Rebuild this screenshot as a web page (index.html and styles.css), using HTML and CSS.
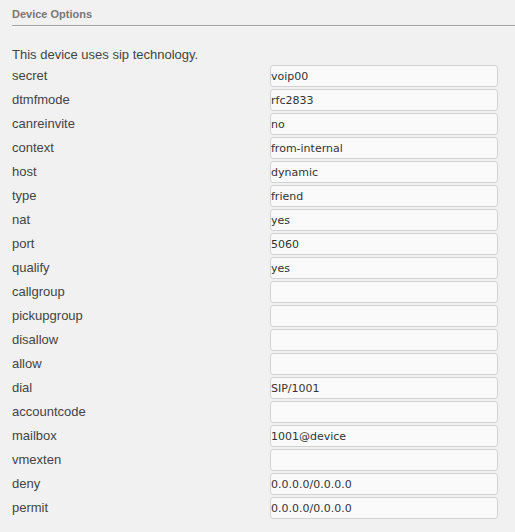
FILE: index.html
```html
<!DOCTYPE html>
<html>
<head>
<meta charset="utf-8">
<link rel="stylesheet" href="styles.css">
</head>
<body>
<div class="panel">
  <div class="legend">Device Options</div>
  <div class="rule"></div>
  <p class="intro">This device uses sip technology.</p>
  <div class="form">
    <label>secret</label><input type="text" value="voip00">
    <label>dtmfmode</label><input type="text" value="rfc2833">
    <label>canreinvite</label><input type="text" value="no">
    <label>context</label><input type="text" value="from-internal">
    <label>host</label><input type="text" value="dynamic">
    <label>type</label><input type="text" value="friend">
    <label>nat</label><input type="text" value="yes">
    <label>port</label><input type="text" value="5060">
    <label>qualify</label><input type="text" value="yes">
    <label>callgroup</label><input type="text" value="">
    <label>pickupgroup</label><input type="text" value="">
    <label>disallow</label><input type="text" value="">
    <label>allow</label><input type="text" value="">
    <label>dial</label><input type="text" value="SIP/1001">
    <label>accountcode</label><input type="text" value="">
    <label>mailbox</label><input type="text" value="1001@device">
    <label>vmexten</label><input type="text" value="">
    <label>deny</label><input type="text" value="0.0.0.0/0.0.0.0">
    <label>permit</label><input type="text" value="0.0.0.0/0.0.0.0">
  </div>
</div>
</body>
</html>
```
FILE: styles.css
```css
html, body {
  margin: 0;
  padding: 0;
  background: #f1f1f1;
}
.panel {
  padding-left: 12px;
  font-family: "Liberation Sans", Arial, sans-serif;
}
.legend {
  font-size: 11px;
  font-weight: bold;
  color: #777;
  height: 25px;
  line-height: 28px;
}
.rule {
  border-top: 1px solid #a3a3a3;
  border-bottom: 1px solid #f8f8f8;
}
.intro {
  margin: 0;
  padding-top: 20px;
  height: 18px;
  line-height: 16px;
  font-size: 13px;
  color: #444;
}
.form {
  display: grid;
  grid-template-columns: 258px 228px;
  row-gap: 2px;
}
.form label {
  font-size: 13px;
  color: #444;
  line-height: 22px;
  height: 22px;
}
.form input {
  box-sizing: border-box;
  width: 228px;
  height: 22px;
  margin: 0;
  padding: 0 1px 0 0;
  border: 1px solid #d2d2d2;
  border-radius: 3px;
  background: #fafafa;
  font-family: "DejaVu Sans", Verdana, sans-serif;
  font-size: 11px;
  color: #333;
  outline: none;
}
```
